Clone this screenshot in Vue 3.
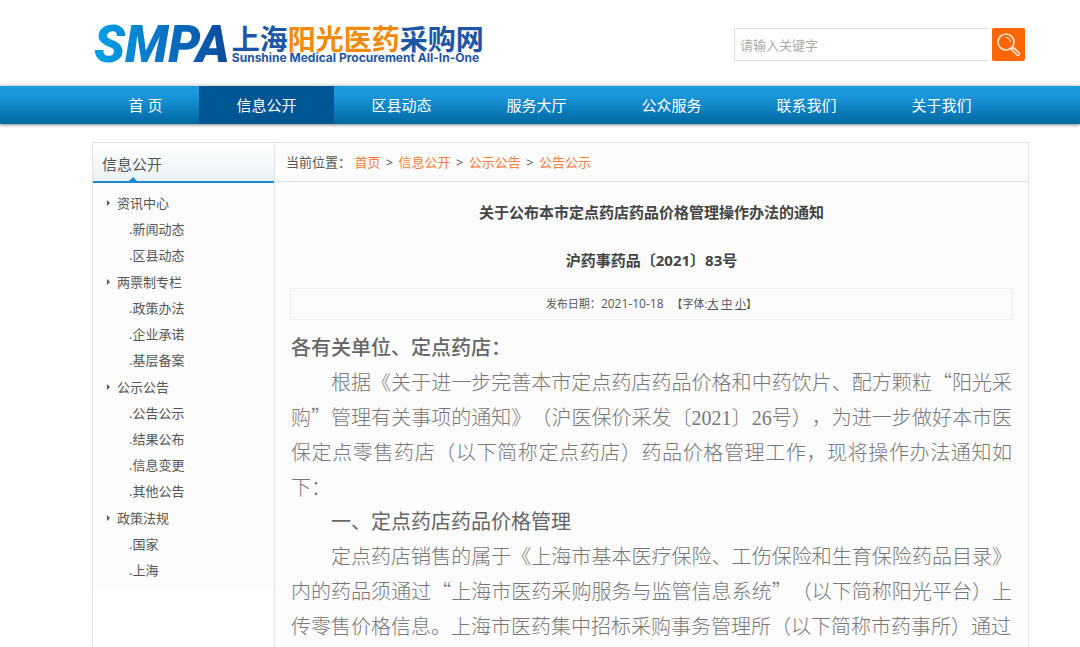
<template>
  <div class="page">
    <header class="header">
      <a class="logo" href="#">
        <span class="logo-mark">SMPA</span>
        <span class="logo-name">
          <span class="logo-cn">上海<em>阳光医药</em>采购网</span>
          <span class="logo-en">Sunshine Medical Procurement All-In-One</span>
        </span>
      </a>
      <form class="search" @submit.prevent>
        <input v-model="keyword" type="text" placeholder="请输入关键字" aria-label="请输入关键字" />
        <button type="submit" aria-label="搜索">
          <svg viewBox="0 0 33 33" width="33" height="33" fill="none" stroke="#ffe9dc">
            <circle cx="14" cy="14" r="8" stroke-width="1.6" />
            <path d="M13.5 9.5a4.8 4.8 0 0 1 5 4.5" stroke-width="1.1" />
            <path d="M19.4 21.4l2-2 5.8 5.6c1.2 1.4-.8 3.3-2.1 2.1z" stroke-width="1.5" stroke-linejoin="round" />
          </svg>
        </button>
      </form>
    </header>

    <!-- 主导航 -->
    <nav class="nav">
      <a v-for="item in navs" :key="item" href="#" :class="{ active: item === '信息公开' }">{{ item }}</a>
    </nav>

    <div class="main">
      <aside class="side">
        <h2>信息公开</h2>
        <ul class="menu">
          <li v-for="group in menus" :key="group.name">
            <a class="group" href="#">{{ group.name }}</a>
            <ul>
              <li v-for="child in group.children" :key="child">
                <a href="#">.{{ child }}</a>
              </li>
            </ul>
          </li>
        </ul>
      </aside>

      <section class="content">
        <div class="crumbs">
          当前位置：
          <template v-for="(item, index) in crumbs" :key="item">
            <span v-if="index"> &gt; </span><a href="#">{{ item }}</a>
          </template>
        </div>
        <article>
          <h1>关于公布本市定点药店药品价格管理操作办法的通知</h1>
          <h1>沪药事药品〔2021〕83号</h1>
          <div class="meta">
            <span>发布日期：<time>2021-10-18</time></span>
            <span>【字体:<a href="#">大</a> <a href="#">中</a> <a href="#">小</a>】</span>
          </div>
          <div class="text">
            <h3 class="to">各有关单位、定点药店：</h3>
            <p>根据《关于进一步完善本市定点药店药品价格和中药饮片、配方颗粒“阳光采购”管理有关事项的通知》（沪医保价采发〔<span class="num">2021</span>〕<span class="num">26</span>号），为进一步做好本市医保定点零售药店（以下简称定点药店）药品价格管理工作，现将操作办法通知如下：</p>
            <h3>一、定点药店药品价格管理</h3>
            <p>定点药店销售的属于《上海市基本医疗保险、工伤保险和生育保险药品目录》内的药品须通过“上海市医药采购服务与监管信息系统”（以下简称阳光平台）上传零售价格信息。上海市医药集中招标采购事务管理所（以下简称市药事所）通过</p>
          </div>
        </article>
      </section>
    </div>
  </div>
</template>

<script setup>
import { ref } from 'vue';

const keyword = ref('');
const navs = ['首 页', '信息公开', '区县动态', '服务大厅', '公众服务', '联系我们', '关于我们'];
const crumbs = ['首页', '信息公开', '公示公告', '公告公示'];
const menus = [
  { name: '资讯中心', children: ['新闻动态', '区县动态'] },
  { name: '两票制专栏', children: ['政策办法', '企业承诺', '基层备案'] },
  { name: '公示公告', children: ['公告公示', '结果公布', '信息变更', '其他公告'] },
  { name: '政策法规', children: ['国家', '上海'] }
];
</script>

<style>
body {
  margin: 0;
  background: #fff;
}
</style>

<style scoped>
.page {
  height: 100vh;
  overflow: hidden;
  color: #555;
  font-family: "Open Sans", "Noto Sans CJK SC", sans-serif;
  font-size: 13px;
}

a {
  color: inherit;
  text-decoration: none;
}

ul {
  margin: 0;
  padding: 0;
  list-style: none;
}

.header {
  display: flex;
  justify-content: space-between;
  align-items: flex-start;
  height: 85px;
  box-sizing: border-box;
  padding: 24px 55px 0 94px;
}

.logo {
  display: flex;
}

.logo-mark {
  padding-right: 2px;
  background: linear-gradient(90deg, #00a2e6, #0873c4 50%, #0b479b);
  background-clip: text;
  -webkit-background-clip: text;
  color: transparent;
  font-family: Roboto, "Liberation Sans", sans-serif;
  font-size: 51px;
  font-style: italic;
  font-weight: 900;
  line-height: 42px;
}

.logo-name {
  display: flex;
  flex-direction: column;
  color: #1c56a5;
}

.logo-cn {
  font-family: "Noto Sans CJK SC", sans-serif;
  font-size: 28px;
  font-weight: 700;
  line-height: 28px;
}

.logo-cn em {
  color: #f28a0c;
  font-style: normal;
}

.logo-en {
  font-family: Inter, "Liberation Sans", sans-serif;
  font-size: 12px;
  font-weight: 700;
  line-height: 12px;
}

.search {
  display: flex;
  gap: 4px;
  margin-top: 4px;
}

.search input {
  width: 254px;
  height: 33px;
  box-sizing: border-box;
  padding: 0 5px;
  border: 1px solid #ddd;
  border-right: none;
  border-radius: 2px 0 0 2px;
  outline: none;
  font: inherit;
}

.search input::placeholder {
  color: #aaa;
}

.search button {
  width: 33px;
  height: 33px;
  padding: 0;
  border: none;
  border-radius: 2px;
  background: #ff6600;
  cursor: pointer;
}

.search svg {
  display: block;
}

.nav {
  display: flex;
  height: 38px;
  padding: 0 51px 0 92px;
  border-top: 1px solid #ddd;
  background: linear-gradient(#1b9ade 20%, #0068a2);
  box-shadow: 0 1px 3px rgba(0, 0, 0, 0.5);
}

.nav a {
  width: 135px;
  color: #fff;
  font-size: 15px;
  line-height: 38px;
  text-align: center;
}

.nav a:first-child {
  width: 107px;
}

.nav .active {
  background: #005593;
}

.main {
  display: flex;
  margin: 18px 51px 0 92px;
  border: 1px solid #e3e3e3;
}

.side {
  width: 181px;
  border-right: 1px solid #e3e3e3;
}

.side h2 {
  position: relative;
  margin: 0;
  padding: 4px 9px 0;
  border-bottom: 2px solid #2089cb;
  background: linear-gradient(#fff, #eaf2f7);
  font-size: 15px;
  font-weight: 400;
  line-height: 34px;
}

.side h2::after {
  content: "";
  position: absolute;
  bottom: 0;
  left: 36px;
  border: 4px solid transparent;
  border-top: none;
  border-bottom-color: #2089cb;
}

.menu {
  padding: 7px 0 6px;
  background: #fcfcfc;
  line-height: 26px;
}

.menu > li + li {
  margin-top: 1px;
}

.menu a {
  display: block;
  padding-left: 36px;
}

.menu .group {
  display: flex;
  align-items: center;
  gap: 7px;
  padding-left: 14px;
}

.group::before {
  content: "";
  border: 3px solid transparent;
  border-right: none;
  border-left-color: #555;
}

.content {
  flex: 1;
  min-width: 0;
  background: #fcfcfc;
}

.crumbs {
  padding-left: 11px;
  border-bottom: 1px solid #e3e3e3;
  line-height: 38px;
}

.crumbs span {
  margin: 0 2px;
}

.crumbs a {
  color: #ff7d40;
}

article {
  padding: 6px 15px 24px;
}

h1 {
  margin: 0;
  color: #444;
  font-size: 15px;
  font-weight: 700;
  line-height: 48px;
  text-align: center;
}

.meta {
  display: flex;
  justify-content: center;
  gap: 8px;
  margin-top: 4px;
  border: 1px solid #eee;
  font-size: 11px;
  line-height: 30px;
}

.meta time {
  font-size: 12px;
}

.meta a {
  text-decoration: underline;
}

.text {
  padding: 10px 1px 0;
  color: #777;
  font-family: "Noto Sans CJK SC", sans-serif;
  font-size: 20px;
  text-spacing-trim: space-all;
}

.text p {
  margin: 0;
  font-weight: 300;
  line-height: 35px;
  text-align: justify;
  text-indent: 40px;
}

.text h3 {
  margin: 0;
  color: #666;
  font-size: 20px;
  font-weight: 400;
  line-height: 34px;
  text-indent: 40px;
}

.text .to {
  font-weight: 500;
  text-indent: 0;
}

.num {
  font-family: "Liberation Serif", serif;
  line-height: 20px;
}
</style>
